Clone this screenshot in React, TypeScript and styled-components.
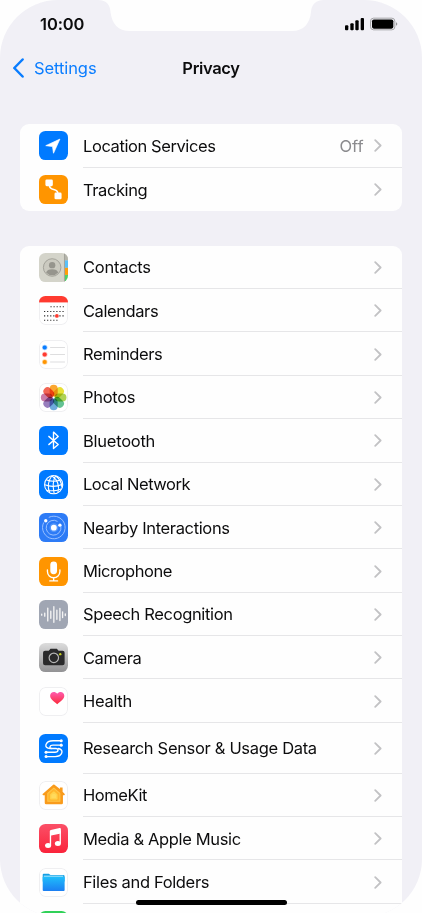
import type { ReactNode } from "react";
import styled, { createGlobalStyle } from "styled-components";

const GlobalStyle = createGlobalStyle`
  * {
    box-sizing: border-box;
  }
  body {
    margin: 0;
    background: #fefefe;
    font-family: Inter, "Liberation Sans", sans-serif;
    color: #0c0c0d;
  }
`;

const Viewport = styled.div`
  width: 422px;
  height: 913px;
  overflow: hidden;
`;

const Phone = styled.div`
  position: relative;
  height: 917px;
  overflow: hidden;
  border-radius: 58px;
  background: #f1f0f6;
`;

const Notch = styled.svg`
  position: absolute;
  top: 0;
  left: 98px;
`;

const StatusBar = styled.div`
  display: flex;
  justify-content: space-between;
  align-items: center;
  height: 48px;
  padding: 0 24px 0 40px;
`;

const Clock = styled.span`
  font-size: 16.5px;
  font-weight: 600;
  letter-spacing: -0.1px;
`;

const NavBar = styled.header`
  display: grid;
  grid-template-columns: 1fr auto 1fr;
  align-items: center;
  height: 40px;
  padding: 0 12px;
  margin-bottom: 36.3px;
`;

const BackButton = styled.a`
  display: flex;
  align-items: center;
  gap: 10px;
  color: #0a7dff;
  font-size: 16.5px;
  letter-spacing: -0.08px;
`;

const Title = styled.h1`
  margin: 0;
  font-size: 16.5px;
  font-weight: 600;
  letter-spacing: -0.35px;
`;

const Group = styled.section`
  margin: 0 19.6px 34.5px 20px;
  border-radius: 9px;
  background: #fefefe;
  overflow: hidden;
`;

const Row = styled.div<{ $tall?: boolean }>`
  display: flex;
  align-items: center;
  height: ${({ $tall }) => ($tall ? 50.8 : 43.4)}px;
  padding-left: 19.3px;
`;

const RowBody = styled.div`
  display: flex;
  flex: 1;
  align-items: center;
  align-self: stretch;
  margin-left: 14.7px;
  padding: 1px 20px 0 0;
  border-bottom: 1px solid #e6e6e8;
  ${Row}:last-child & {
    border-bottom: 0;
  }
`;

const Label = styled.span<{ $spacing?: number }>`
  flex: 1;
  font-size: 16.5px;
  letter-spacing: ${({ $spacing = -0.35 }) => $spacing}px;
  white-space: nowrap;
`;

const Value = styled.span`
  margin-right: 11px;
  color: #8b8b8e;
  font-size: 16.5px;
  letter-spacing: -0.1px;
`;

const AppIcon = styled.svg`
  flex: none;
  width: 29px;
  height: 29px;
  border-radius: 6.4px;
`;

const HomeIndicator = styled.div`
  position: absolute;
  top: 900px;
  left: 136px;
  width: 151px;
  height: 5px;
  border-radius: 3px;
  background: #000;
`;

const Chevron = () => (
  <svg width="8" height="13" viewBox="0 0 8 13" fill="none">
    <path d="M1.2 1.2 6.6 6.5 1.2 11.8" stroke="#c2c2c4" strokeWidth="1.8" strokeLinecap="round" strokeLinejoin="round" />
  </svg>
);

const StatusIcons = () => (
  <svg width="53" height="14" viewBox="0 0 159 42">
    <rect x="0" y="25" width="10" height="15" rx="3" />
    <rect x="16" y="19" width="10" height="21" rx="3" />
    <rect x="31" y="10" width="10" height="30" rx="3" />
    <rect x="47" y="3" width="10" height="37" rx="3" />
    <rect x="76.5" y="3.5" width="73" height="35" rx="9" fill="none" stroke="#a5a5a8" strokeWidth="3" />
    <rect x="81" y="7.5" width="64" height="27.5" rx="5.5" />
    <path d="M153 16q4 1.500 4 5t-4 5z" fill="#97979a" />
  </svg>
);

// Every icon is drawn on an 86 x 86 grid
const icons: Record<string, ReactNode> = {
  location: (
    <>
      <rect width="86" height="86" fill="#007aff" />
      <path d="M62 24 20 43.500 40 46 43 66z" fill="#fff" stroke="#fff" strokeWidth="2" strokeLinejoin="round" />
    </>
  ),
  tracking: (
    <>
      <rect width="86" height="86" fill="#ff9500" />
      <rect x="19" y="13" width="22" height="20" rx="4" fill="#fff" />
      <rect x="46" y="52" width="21" height="20" rx="4" fill="#fff" />
      <path d="M31 31C31 49 56 37 56 55" fill="none" stroke="#fff" strokeWidth="4.500" />
    </>
  ),
  contacts: (
    <>
      <rect width="86" height="86" fill="#d4d4ca" />
      <rect x="75" width="11" height="22" fill="#b4b4aa" />
      <rect x="77" y="22" width="9" height="22" fill="#5ac0f8" />
      <rect x="77" y="44" width="9" height="21" fill="#ff9d0a" />
      <rect x="77" y="65" width="9" height="21" fill="#4cd268" />
      <rect x="74" width="3" height="86" fill="#a3a39a" />
      <circle cx="39" cy="43" r="26" fill="#cbcac0" stroke="#9b9a91" strokeWidth="2.5" />
      <circle cx="39" cy="36" r="9.500" fill="#96958d" />
      <path d="M21 58q3-10 18-10t18 10q-7 8-18 8t-18-8z" fill="#96958d" />
    </>
  ),
  calendars: (
    <>
      <rect width="86" height="86" fill="#fff" />
      <g stroke="#222" strokeWidth="3.400" strokeDasharray="3.400 5.700">
        <path d="M34 32H74M15 46H74M15 59H74" />
        <path d="M15 72H56" />
      </g>
      <circle cx="53" cy="59" r="5.500" fill="#ff3b30" />
    </>
  ),
  reminders: (
    <>
      <rect width="86" height="86" fill="#fff" />
      <path d="M33 22H77M33 43H77M33 65H77" stroke="#dededf" strokeWidth="3" />
      <g strokeWidth="4.500" strokeOpacity="0.350">
        <circle cx="17" cy="22" r="6" fill="#0a7dff" stroke="#0a7dff" />
        <circle cx="17" cy="43" r="6" fill="#ff3b30" stroke="#ff3b30" />
        <circle cx="17" cy="65" r="6" fill="#ff9500" stroke="#ff9500" />
      </g>
    </>
  ),
  photos: (
    <>
      <rect width="86" height="86" fill="#fff" />
      {["#fb9a12", "#e5dc1c", "#a4cc3c", "#4dba84", "#5a9fd8", "#8a6cb4", "#c46a9c", "#f0503c"].map((fill, i) => (
        <rect
          key={fill}
          x="31.500"
          y="5"
          width="24"
          height="35"
          rx="12"
          fill={fill}
          fillOpacity="0.880"
          transform={`rotate(${i * 45} 43.500 43)`}
          style={{ mixBlendMode: "multiply" }}
        />
      ))}
    </>
  ),
  bluetooth: (
    <>
      <rect width="86" height="86" fill="#007aff" />
      <path d="M28 30 57 55 43 67V18L57 31 28 56" fill="none" stroke="#fff" strokeWidth="4" strokeLinejoin="round" />
    </>
  ),
  network: (
    <>
      <rect width="86" height="86" fill="#007aff" />
      <g fill="none" stroke="#fff" strokeWidth="3.200">
        <circle cx="43.500" cy="43.500" r="27" />
        <path d="M38 17C26 34 25 52 32 68M38 17C55 29 61 48 56 67M49 17C40 33 41 52 45 70M49 17C62 27 68 42 68 52" />
        <path d="M21 29Q43 38 66 29M17 44Q43 54 70 42M22 60Q43 65 66 56" />
      </g>
    </>
  ),
  nearby: (
    <>
      <rect width="86" height="86" fill="#2d7bf6" />
      <g fill="none" stroke="#9fc5ff" strokeWidth="2.800">
        <path d="M29 13A33.500 33.500 0 1 1 14 28" />
        <path d="M55 25A22 22 0 1 0 65 40" />
      </g>
      <circle cx="44" cy="43.500" r="13" fill="#5597fa" />
      <g fill="#fff">
        <circle cx="44" cy="43.500" r="8.500" />
        <circle cx="20" cy="23" r="5" />
        <circle cx="62" cy="36" r="5" />
      </g>
    </>
  ),
  microphone: (
    <>
      <rect width="86" height="86" fill="#ff9500" />
      <rect x="33.500" y="13" width="20" height="38" rx="10" fill="#fff" />
      <path d="M25 38v5a18.500 18.500 0 0 0 37 0v-5M43.500 62v9M32 71H55" fill="none" stroke="#fff" strokeWidth="4" strokeLinecap="round" />
    </>
  ),
  speech: (
    <>
      <rect width="86" height="86" fill="#a0a6b3" />
      <path
        d="M8 42v3M17 39v9M26 24v38M35 33v21M44 20v46M53 30v27M62 25v36M70 35v17M78 41v5"
        stroke="#f4f4f4"
        strokeWidth="4"
        strokeLinecap="round"
      />
    </>
  ),
  camera: (
    <>
      <defs>
        <linearGradient id="camera" x2="0" y2="1">
          <stop stopColor="#dcdcdc" />
          <stop offset="1" stopColor="#929294" />
        </linearGradient>
      </defs>
      <rect width="86" height="86" fill="url(#camera)" />
      <path d="M18 23H29L34 17H53L58 23H70Q76 23 76 29V60Q76 66 70 66H18Q12 66 12 60V29Q12 23 18 23z" fill="#2a2a2b" />
      <circle cx="44" cy="44" r="14" fill="#29292a" stroke="#b5b5b5" strokeWidth="3.500" />
      <circle cx="63" cy="33" r="3.500" fill="#c5d01f" />
    </>
  ),
  health: (
    <>
      <defs>
        <linearGradient id="health" x2="0" y2="1">
          <stop stopColor="#ff5cb0" />
          <stop offset="1" stopColor="#fb2b3a" />
        </linearGradient>
      </defs>
      <rect width="86" height="86" fill="#fff" />
      <path d="M54 51C43 42 33 36 33 26C33 13 48 11 54 20C60 11 75 13 75 26C75 36 65 42 54 51z" fill="url(#health)" />
    </>
  ),
  research: (
    <>
      <rect width="86" height="86" fill="#007aff" />
      <g fill="none" stroke="#fff" strokeWidth="4">
        <path d="M65 20H42C18 20 12 43 33 43H50C59 43 59 54 47 54H22" />
        <path d="M65 33H41C31 33 29 43 38 43" />
        <path d="M22 67H48C70 67 76 45 56 43" />
      </g>
      <g fill="#fff">
        <circle cx="66" cy="20" r="4.500" />
        <circle cx="66" cy="33" r="4.500" />
        <circle cx="21" cy="54" r="4.500" />
        <circle cx="21" cy="67" r="4.500" />
      </g>
    </>
  ),
  homekit: (
    <>
      <rect width="86" height="86" fill="#fff" />
      <path d="M10 39 42 11Q44 10 46 11L62 24V19H70V32L77 39 75 42H71V65Q71 69 67 69H21Q17 69 17 65V42H12z" fill="#f99b1c" />
      <path d="M44 21 62 37V60H26V37z" fill="#ffb62c" stroke="#ffc64a" strokeWidth="3" strokeLinejoin="round" />
      <path d="M44 33 53 41V53H35V41z" fill="#ffda5c" stroke="#ffd24c" strokeWidth="4" strokeLinejoin="round" />
    </>
  ),
  music: (
    <>
      <defs>
        <linearGradient id="music" x2="0" y2="1">
          <stop stopColor="#fb5067" />
          <stop offset="1" stopColor="#fa233b" />
        </linearGradient>
      </defs>
      <rect width="86" height="86" fill="url(#music)" />
      <path d="M32 21Q32 18 35 17.500L61 12Q65 11.500 65 15V28L36 34V62H32z" fill="#fff" />
      <path d="M61 20h4v36h-4z" fill="#fff" />
      <ellipse cx="27" cy="64" rx="9" ry="7.500" fill="#fff" />
      <ellipse cx="56" cy="58" rx="9" ry="7.500" fill="#fff" />
    </>
  ),
  files: (
    <>
      <defs>
        <linearGradient id="files" x2="0" y2="1">
          <stop stopColor="#1fbdfb" />
          <stop offset="1" stopColor="#1c7ff2" />
        </linearGradient>
      </defs>
      <rect width="86" height="86" fill="#fff" />
      <path d="M11 20Q11 17 14 17H29L34 21H72Q76 21 76 25V40H11z" fill="#149fe4" />
      <path d="M14 22H72V28H14z" fill="#7fd6fa" />
      <path d="M11 27H76V65Q76 68 73 68H14Q11 68 11 65z" fill="url(#files)" />
    </>
  ),
  green: <rect width="86" height="86" fill="#30d158" />,
};

interface Item {
  icon: string;
  label: string;
  value?: string;
  spacing?: number;
  outlined?: boolean;
  tall?: boolean;
}

const systemItems: Item[] = [
  { icon: "location", label: "Location Services", value: "Off", spacing: -0.41 },
  { icon: "tracking", label: "Tracking", spacing: -0.42 },
];

const appItems: Item[] = [
  { icon: "contacts", label: "Contacts", spacing: -0.25 },
  { icon: "calendars", label: "Calendars", spacing: -0.42, outlined: true },
  { icon: "reminders", label: "Reminders", spacing: -0.38, outlined: true },
  { icon: "photos", label: "Photos", spacing: -0.3, outlined: true },
  { icon: "bluetooth", label: "Bluetooth", spacing: -0.25 },
  { icon: "network", label: "Local Network", spacing: -0.45 },
  { icon: "nearby", label: "Nearby Interactions" },
  { icon: "microphone", label: "Microphone", spacing: -0.42 },
  { icon: "speech", label: "Speech Recognition" },
  { icon: "camera", label: "Camera", spacing: -0.42 },
  { icon: "health", label: "Health", spacing: -0.3, outlined: true },
  { icon: "research", label: "Research Sensor & Usage Data", spacing: -0.32, tall: true },
  { icon: "homekit", label: "HomeKit", spacing: -0.42, outlined: true },
  { icon: "music", label: "Media & Apple Music" },
  { icon: "files", label: "Files and Folders", outlined: true },
  { icon: "green", label: "" },
];

function SettingsGroup({ items }: { items: Item[] }) {
  return (
    <Group>
      {items.map(({ icon, label, value, spacing, outlined, tall }) => (
        <Row key={icon} $tall={tall}>
          <AppIcon viewBox="0 0 86 86">
            {icons[icon]}
            {outlined && <rect x="1.5" y="1.5" width="83" height="83" rx="18" fill="none" stroke="#efeff1" strokeWidth="3" />}
            {icon === "calendars" && <rect width="86" height="19" fill="#ff3b30" />}
          </AppIcon>
          <RowBody>
            <Label $spacing={spacing}>{label}</Label>
            {value && <Value>{value}</Value>}
            <Chevron />
          </RowBody>
        </Row>
      ))}
    </Group>
  );
}

export default function App() {
  return (
    <Viewport>
      <GlobalStyle />
      <Phone>
        <Notch width="226" height="31" viewBox="0 0 226 31">
          <path d="M0 0C9 0 12 5 12.500 12C14 24 20 31 32 31H194C206 31 212 23 213 12C213.500 5 217 0 226 0z" fill="#fefefe" />
        </Notch>
        <StatusBar>
          <Clock>10:00</Clock>
          <StatusIcons />
        </StatusBar>
        <NavBar>
          <BackButton>
            <svg width="12" height="20" viewBox="0 0 12 20" fill="none">
              <path d="M10.600 1.500 2.300 10l8.300 8.500" stroke="#0a7dff" strokeWidth="2.500" strokeLinecap="round" strokeLinejoin="round" />
            </svg>
            Settings
          </BackButton>
          <Title>Privacy</Title>
        </NavBar>
        <SettingsGroup items={systemItems} />
        <SettingsGroup items={appItems} />
        <HomeIndicator />
      </Phone>
    </Viewport>
  );
}
